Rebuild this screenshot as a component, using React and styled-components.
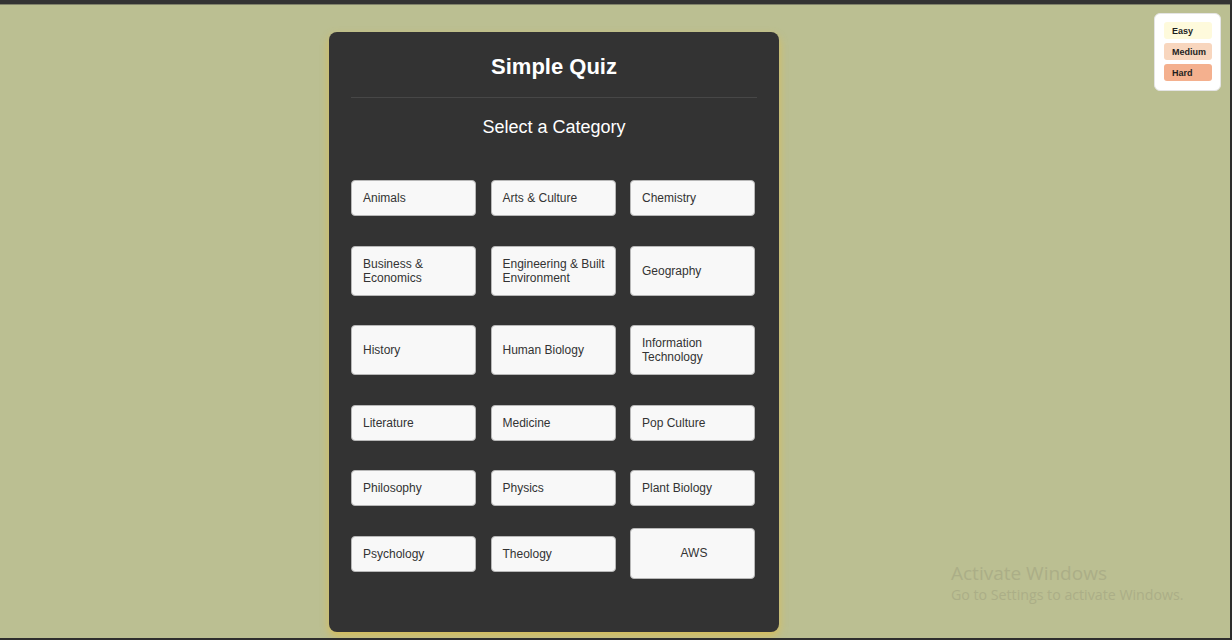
import React from "react";
import styled, { createGlobalStyle } from "styled-components";

const Global = createGlobalStyle`
  html, body { margin: 0; padding: 0; }
  body {
    font-family: "Liberation Sans", Arial, sans-serif;
    background: #bbbf92;
  }
  * { box-sizing: border-box; }
`;

const Screen = styled.div`
  width: 1232px;
  height: 640px;
  overflow: hidden;
  position: relative;
  background: #bbbf92;
  border-top: 4px solid #333333;
  border-right: 2px solid #2e2e2e;
  border-bottom: 2px solid #2e2e2e;
  display: flex;
  justify-content: flex-start;
  padding-left: 329px;
  &::before {
    content: "";
    position: absolute;
    left: 0;
    right: 0;
    top: 0;
    height: 1px;
    background: #80826a;
  }
`;

const Card = styled.main`
  margin-top: 28px;
  width: 450px;
  height: 600px;
  background: #333333;
  border-radius: 8px;
  box-shadow: 0 4px 8px rgba(226, 190, 70, 0.75);
  padding: 22px 22px 0;
  display: flex;
  flex-direction: column;
  align-items: stretch;
`;

const Title = styled.h1`
  margin: 0;
  font-size: 22px;
  line-height: 25px;
  font-weight: 700;
  color: #ffffff;
  text-align: center;
`;

const Divider = styled.hr`
  margin: 18px 0 0;
  border: none;
  height: 1px;
  background: #474747;
`;

const Subtitle = styled.h2`
  margin: 19px 0 0;
  font-size: 18px;
  line-height: 21px;
  font-weight: 400;
  color: #ffffff;
  text-align: center;
`;

const Grid = styled.div`
  margin-top: 42px;
  display: grid;
  grid-template-columns: repeat(3, 125px);
  column-gap: 14.5px;
  row-gap: 29.5px;
  align-items: stretch;
`;

const CatButton = styled.button`
  font-family: "Liberation Sans", Arial, sans-serif;
  font-size: 12px;
  line-height: normal;
  color: #333333;
  background: #f8f8f8;
  border: 1px solid #b8b8b8;
  border-radius: 4px;
  padding: 10px 8px 10px 11px;
  margin: ${(p) => (p.$big ? "-8px 0 -7px" : "0")};
  text-align: ${(p) => (p.$big ? "center" : "left")};
  cursor: pointer;
`;

const Legend = styled.div`
  position: absolute;
  top: 9px;
  right: 9px;
  width: 67px;
  background: #ffffff;
  border-radius: 6px;
  border: 1px solid #e4e4e4;
  padding: 8px 8px 9px 9px;
  display: flex;
  flex-direction: column;
  gap: 4px;
`;

const LegendItem = styled.div`
  height: 17px;
  border-radius: 3px;
  background: ${(p) => p.$bg};
  font-size: 9px;
  font-weight: 700;
  color: #1e1e1e;
  padding-left: 8px;
  display: flex;
  align-items: center;
`;

const Watermark = styled.div`
  position: absolute;
  left: 951px;
  top: 557px;
  color: #abae87;
  font-family: "Open Sans", "Noto Sans", sans-serif;
  pointer-events: none;
`;

const WmTitle = styled.div`
  font-size: 19px;
  line-height: 24px;
`;

const WmSub = styled.div`
  font-size: 14.2px;
  line-height: 19px;
`;

const categories = [
  "Animals",
  "Arts & Culture",
  "Chemistry",
  "Business & Economics",
  "Engineering & Built Environment",
  "Geography",
  "History",
  "Human Biology",
  "Information Technology",
  "Literature",
  "Medicine",
  "Pop Culture",
  "Philosophy",
  "Physics",
  "Plant Biology",
  "Psychology",
  "Theology",
];

export default function App() {
  return (
    <>
      <Global />
      <Screen>
        <Card>
          <Title>Simple Quiz</Title>
          <Divider />
          <Subtitle>Select a Category</Subtitle>
          <Grid>
            {categories.map((c) => (
              <CatButton key={c}>{c}</CatButton>
            ))}
            <CatButton $big>AWS</CatButton>
          </Grid>
        </Card>
        <Legend>
          <LegendItem $bg="#fefadc">Easy</LegendItem>
          <LegendItem $bg="#f8d6be">Medium</LegendItem>
          <LegendItem $bg="#f4b08e">Hard</LegendItem>
        </Legend>
        <Watermark>
          <WmTitle>Activate Windows</WmTitle>
          <WmSub>Go to Settings to activate Windows.</WmSub>
        </Watermark>
      </Screen>
    </>
  );
}
